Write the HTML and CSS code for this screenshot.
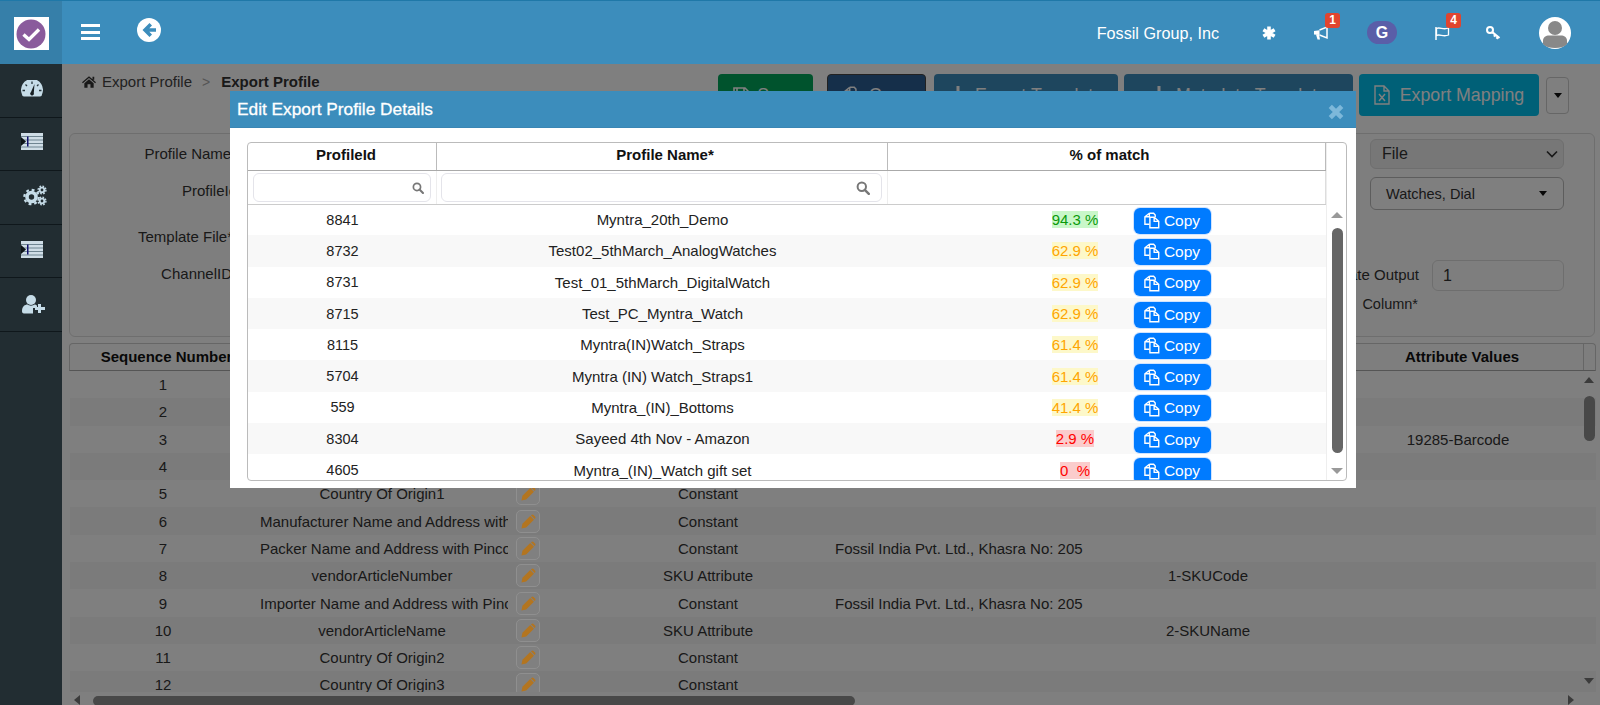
FILE: index.html
```html
<!DOCTYPE html>
<html lang="en">
<head>
<meta charset="utf-8">
<title>Export Profile</title>
<link rel="stylesheet" href="styles.css">
</head>
<body>
<svg class="defs" width="0" height="0" aria-hidden="true">
  <symbol id="i-copy" viewBox="0 0 16 16">
    <path d="M6 1.200H10L11.500 2.800V5M6 1.200L1.800 4.500V11.500H6M6 1.200V4.500H1.800" fill="none" stroke="currentColor" stroke-width="1.300"/>
    <path d="M10.500 5H6.500V14.800H14.800V8.800L10.500 5ZM10.500 5V8.800H14.800" fill="none" stroke="currentColor" stroke-width="1.300"/>
  </symbol>
  <symbol id="i-pencil" viewBox="0 0 16 16">
    <path d="M0.500 15.500L1.500 10.500L9.800 2.200L13.800 6.200L5.500 14.500Z" fill="currentColor"/>
    <path d="M11 1L12.800 0.500L15.500 3.200L15 5L14.600 5.400L10.600 1.400Z" fill="currentColor"/>
  </symbol>
  <symbol id="i-search" viewBox="0 0 14 14">
    <circle cx="5.800" cy="5.800" r="4.200" fill="none" stroke="currentColor" stroke-width="2"/>
    <path d="M8.800 8.800L12.800 12.800" stroke="currentColor" stroke-width="2.400" stroke-linecap="round"/>
  </symbol>
  <symbol id="i-indent" viewBox="0 0 22 17">
    <rect width="22" height="17" fill="#cfdde6"/>
    <path d="M0 3.500H22M0 7H22M0 10.500H22M0 14H22" stroke="#6f8591" stroke-width="1"/>
    <path d="M0 4L5 8.500L0 13Z" fill="#0d1316"/>
    <rect x="6" y="3.500" width="1.500" height="10" fill="#10106a"/>
  </symbol>
  <symbol id="i-down" viewBox="0 0 18 18">
    <path d="M7.500 0H10.500V9H14L9 14L4 9H7.500ZM1 14H5L9 16.500L13 14H17V18H1Z" fill="currentColor"/>
  </symbol>
</svg>

<div class="app">
  <header class="topbar">
    <div class="brand">
      <div class="logo">
        <svg viewBox="0 0 34 32" width="34" height="32"><circle cx="17" cy="16" r="14.500" fill="#8a5b9c"/><path d="M9.500 16.500L15 21.500L25 11.500" fill="none" stroke="#fff" stroke-width="3.400"/></svg>
      </div>
    </div>
    <button class="burger" type="button" aria-label="Menu"><span></span><span></span><span></span></button>
    <svg class="back" viewBox="0 0 24 24" width="24" height="24"><circle cx="12" cy="12" r="12" fill="#fff"/><path d="M12.500 5L5.500 12L12.500 19L15 16.500L12.300 13.800H19V10.200H12.300L15 7.500Z" fill="#3c8dbc"/></svg>
    <div class="topright">
      <span class="company">Fossil Group, Inc</span>
      <span class="ticon ml-asterisk">
        <svg viewBox="0 0 16 16" width="16" height="16"><path d="M8 1.500V14.500M2.400 4.750L13.600 11.250M13.600 4.750L2.400 11.250" stroke="#fff" stroke-width="3.600"/></svg>
      </span>
      <span class="ticon ml-mega">
        <svg viewBox="0 0 16 16" width="16" height="16"><path d="M1 6L6.500 5.200L6.500 10L1 9.500Z" fill="#fff"/><path d="M6.500 5L14 2V13L6.500 10" fill="none" stroke="#fff" stroke-width="1.500"/><path d="M3 9.500H6L7 14.500H4.500Z" fill="#fff"/></svg>
        <span class="badge">1</span>
      </span>
      <span class="gpill">G</span>
      <span class="ticon ml-flag">
        <svg viewBox="0 0 16 16" width="16" height="16"><path d="M2 2V15" stroke="#fff" stroke-width="1.500"/><path d="M2.500 3.500C6 1.500 9 5.500 14.500 3V10C9 12.500 6 8.500 2.500 10.500Z" fill="none" stroke="#fff" stroke-width="1.300"/></svg>
        <span class="badge">4</span>
      </span>
      <span class="ticon ml-key">
        <svg viewBox="0 0 16 16" width="16" height="16"><circle cx="5" cy="5" r="3" fill="none" stroke="#fff" stroke-width="2"/><path d="M7.200 7.200L14.500 13M10.500 9.800L9 11.600M13 12L11.500 13.800" stroke="#fff" stroke-width="2.200"/></svg>
      </span>
      <span class="avatar">
        <svg viewBox="0 0 32 32" width="32" height="32"><circle cx="16" cy="16" r="16" fill="#fff"/><circle cx="16" cy="11" r="7" fill="#888"/><path d="M4 24C4 20 7 18.500 10 18.500H22C25 18.500 28 20 28 24V27C25 30 21 31 16 31C11 31 7 30 4 27Z" fill="#888"/></svg>
      </span>
    </div>
  </header>

  <div class="shell">
    <nav class="sidebar">
      <a class="navitem">
        <svg viewBox="0 0 22 17" width="22" height="17"><path d="M1 14.500A11 11 0 1 1 21 14.500Q21 16.500 19 16.500H3Q1 16.500 1 14.500Z" fill="#c6dce8"/><path d="M11 1.500V4M4.500 4.500L6 6M17.500 4.500L16 6M1.500 10.500H4M18 10.500H20.500" stroke="#26343b" stroke-width="1.300"/><path d="M13.500 4L10 12A1.900 1.900 0 1 0 12.800 12.800Z" fill="#161e22"/></svg>
      </a>
      <a class="navitem">
        <svg width="22" height="17"><use href="#i-indent"/></svg>
      </a>
      <a class="navitem navitem-cog">
        <svg viewBox="0 0 24 21" width="24" height="21">
          <circle cx="8.500" cy="12" r="4.500" fill="none" stroke="#c6dce8" stroke-width="3.600"/>
          <circle cx="8.500" cy="12" r="7.200" fill="none" stroke="#c6dce8" stroke-width="2.200" stroke-dasharray="2.800 2.850"/>
          <circle cx="19" cy="5" r="2.300" fill="none" stroke="#c6dce8" stroke-width="1.800"/>
          <circle cx="19" cy="5" r="3.900" fill="none" stroke="#c6dce8" stroke-width="1.400" stroke-dasharray="1.700 1.360"/>
          <circle cx="19" cy="16" r="2.300" fill="none" stroke="#c6dce8" stroke-width="1.800"/>
          <circle cx="19" cy="16" r="3.900" fill="none" stroke="#c6dce8" stroke-width="1.400" stroke-dasharray="1.700 1.360"/>
        </svg>
      </a>
      <a class="navitem">
        <svg width="22" height="17"><use href="#i-indent"/></svg>
      </a>
      <a class="navitem navitem-user">
        <svg viewBox="0 0 24 19" width="24" height="19"><circle cx="9" cy="5" r="5" fill="#c6dce8"/><path d="M0 16C0 11.500 3 9.500 5.500 9.500C7 11 11 11 12.500 9.500C13.500 9.500 14 10 15 10.500V13H11V18.500H2C0.500 18.500 0 17.500 0 16Z" fill="#c6dce8"/><path d="M17.500 9V18M13 13.500H23" stroke="#c6dce8" stroke-width="3"/></svg>
      </a>
    </nav>

    <main class="main">
      <div class="toolbar">
        <div class="crumbs">
          <svg viewBox="0 0 24 20" width="14" height="12"><path d="M12 0L24 10.500L22.500 12L12 3.300L1.500 12L0 10.500ZM18 1H21V6H18ZM4 12L12 5.300L20 12V20H14.500V14H9.500V20H4Z" fill="#333"/></svg>
          <span class="crumb">Export Profile</span>
          <span class="crumb-sep">&gt;</span>
          <b class="crumb-now">Export Profile</b>
        </div>
        <div class="actions">
          <button class="btn btn-save" type="button"><svg viewBox="0 0 16 16" width="16" height="16"><path d="M1 1H12L15 4V15H1ZM4 1V6H11V1M4 15V9H12V15" fill="none" stroke="#fff" stroke-width="1.600"/></svg>Save</button>
          <button class="btn btn-copy" type="button"><svg width="18" height="18"><use href="#i-copy"/></svg>Copy</button>
          <button class="btn btn-tpl1" type="button"><svg width="18" height="18"><use href="#i-down"/></svg>Export Template</button>
          <button class="btn btn-tpl2" type="button"><svg width="18" height="18"><use href="#i-down"/></svg>Metadata Template</button>
          <button class="btn btn-map" type="button"><svg viewBox="0 0 16 20" width="16" height="20"><path d="M1 1H10L15 6V19H1ZM10 1V6H15" fill="none" stroke="#fff" stroke-width="1.400"/><path d="M5 9L11 16M11 9L5 16" stroke="#fff" stroke-width="1.500"/></svg>Export Mapping</button>
          <button class="btn-caret" type="button" aria-label="More"><span class="caret-black"></span></button>
        </div>
      </div>

      <section class="formpanel">
        <div class="labels">
          <label class="lbl lbl-a">Profile Name*</label>
          <label class="lbl lbl-b">ProfileId</label>
          <label class="lbl lbl-c">Template File*</label>
          <label class="lbl lbl-d">ChannelID</label>
        </div>
        <div class="fields">
          <div class="select-file">File
            <svg viewBox="0 0 12 8" width="12" height="8"><path d="M1 1.500L6 6.500L11 1.500" fill="none" stroke="#333" stroke-width="1.700"/></svg>
          </div>
          <div class="select-multi">Watches, Dial<span class="caret-black"></span></div>
          <div class="output-row">
            <span class="output-lbl">Duplicate Output</span>
            <span class="output-input">1</span>
          </div>
          <div class="column-lbl">Column*</div>
        </div>
      </section>

      <section class="grid">
        <div class="grid-head">
          <div class="gh-seq">Sequence Number</div><div></div><div></div><div></div><div></div><div></div><div class="gh-attr">Attribute Values</div><div class="grid-head-end"></div>
        </div>
        <div class="grid-body">
          <div class="row"><span>1</span><span></span><span></span><span></span><span></span><span></span><span></span></div>
          <div class="row row-alt"><span>2</span><span></span><span></span><span></span><span></span><span></span><span></span></div>
          <div class="row"><span>3</span><span></span><span></span><span></span><span></span><span></span><span>19285-Barcode</span></div>
          <div class="row row-alt"><span>4</span><span></span><span></span><span></span><span></span><span></span><span></span></div>
          <div class="row"><span>5</span><span class="name">Country Of Origin1</span><span class="edit"><svg width="15" height="15"><use href="#i-pencil"/></svg></span><span>Constant</span><span></span><span></span><span></span></div>
          <div class="row row-alt"><span>6</span><span class="name">Manufacturer Name and Address with Pincode</span><span class="edit"><svg width="15" height="15"><use href="#i-pencil"/></svg></span><span>Constant</span><span></span><span></span><span></span></div>
          <div class="row"><span>7</span><span class="name">Packer Name and Address with Pincode</span><span class="edit"><svg width="15" height="15"><use href="#i-pencil"/></svg></span><span>Constant</span><span class="val">Fossil India Pvt. Ltd., Khasra No: 205</span><span></span><span></span></div>
          <div class="row row-alt"><span>8</span><span class="name">vendorArticleNumber</span><span class="edit"><svg width="15" height="15"><use href="#i-pencil"/></svg></span><span>SKU Attribute</span><span></span><span>1-SKUCode</span><span></span></div>
          <div class="row"><span>9</span><span class="name">Importer Name and Address with Pincode</span><span class="edit"><svg width="15" height="15"><use href="#i-pencil"/></svg></span><span>Constant</span><span class="val">Fossil India Pvt. Ltd., Khasra No: 205</span><span></span><span></span></div>
          <div class="row row-alt"><span>10</span><span class="name">vendorArticleName</span><span class="edit"><svg width="15" height="15"><use href="#i-pencil"/></svg></span><span>SKU Attribute</span><span></span><span>2-SKUName</span><span></span></div>
          <div class="row"><span>11</span><span class="name">Country Of Origin2</span><span class="edit"><svg width="15" height="15"><use href="#i-pencil"/></svg></span><span>Constant</span><span></span><span></span><span></span></div>
          <div class="row row-alt"><span>12</span><span class="name">Country Of Origin3</span><span class="edit"><svg width="15" height="15"><use href="#i-pencil"/></svg></span><span>Constant</span><span></span><span></span><span></span></div>
        </div>
        <div class="vbar"><span class="arr-up"></span><span class="vthumb"></span><span class="arr-down"></span></div>
        <div class="hbar"><span class="arr-left"></span><span class="hthumb"></span><span class="arr-right"></span></div>
      </section>

      <div class="backdrop"></div>

      <div class="modal">
        <div class="modal-head">
          <span class="modal-title">Edit Export Profile Details</span>
          <svg class="modal-x" viewBox="0 0 14 14" width="16" height="16"><path d="M2 2L12 12M12 2L2 12" stroke="#7db8da" stroke-width="4"/></svg>
        </div>
        <div class="modal-body">
          <div class="ptable">
            <div class="ptable-main">
              <div class="phead">
                <div class="ph-id">ProfileId</div><div>Profile Name*</div><div>% of match</div>
              </div>
              <div class="pfilter">
                <div class="fcell"><span class="finput"><svg width="14" height="14"><use href="#i-search"/></svg></span></div>
                <div class="fcell"><span class="finput"><svg width="14" height="14"><use href="#i-search"/></svg></span></div>
                <div class="fcell"></div>
              </div>
              <div class="pbody">
                <div class="prow"><span class="pid">8841</span><span>Myntra_20th_Demo</span><span class="pmatch"><span class="pwrap"><span class="pct pct-hi">94.3 %</span></span><button class="copy" type="button"><svg width="17" height="17"><use href="#i-copy"/></svg>Copy</button></span></div>
                <div class="prow prow-alt"><span class="pid">8732</span><span>Test02_5thMarch_AnalogWatches</span><span class="pmatch"><span class="pwrap"><span class="pct pct-mid">62.9 %</span></span><button class="copy" type="button"><svg width="17" height="17"><use href="#i-copy"/></svg>Copy</button></span></div>
                <div class="prow"><span class="pid">8731</span><span>Test_01_5thMarch_DigitalWatch</span><span class="pmatch"><span class="pwrap"><span class="pct pct-mid">62.9 %</span></span><button class="copy" type="button"><svg width="17" height="17"><use href="#i-copy"/></svg>Copy</button></span></div>
                <div class="prow prow-alt"><span class="pid">8715</span><span>Test_PC_Myntra_Watch</span><span class="pmatch"><span class="pwrap"><span class="pct pct-mid">62.9 %</span></span><button class="copy" type="button"><svg width="17" height="17"><use href="#i-copy"/></svg>Copy</button></span></div>
                <div class="prow"><span class="pid">8115</span><span>Myntra(IN)Watch_Straps</span><span class="pmatch"><span class="pwrap"><span class="pct pct-mid">61.4 %</span></span><button class="copy" type="button"><svg width="17" height="17"><use href="#i-copy"/></svg>Copy</button></span></div>
                <div class="prow prow-alt"><span class="pid">5704</span><span>Myntra (IN) Watch_Straps1</span><span class="pmatch"><span class="pwrap"><span class="pct pct-mid">61.4 %</span></span><button class="copy" type="button"><svg width="17" height="17"><use href="#i-copy"/></svg>Copy</button></span></div>
                <div class="prow"><span class="pid">559</span><span>Myntra_(IN)_Bottoms</span><span class="pmatch"><span class="pwrap"><span class="pct pct-mid">41.4 %</span></span><button class="copy" type="button"><svg width="17" height="17"><use href="#i-copy"/></svg>Copy</button></span></div>
                <div class="prow prow-alt"><span class="pid">8304</span><span>Sayeed 4th Nov - Amazon</span><span class="pmatch"><span class="pwrap"><span class="pct pct-lo">2.9 %</span></span><button class="copy" type="button"><svg width="17" height="17"><use href="#i-copy"/></svg>Copy</button></span></div>
                <div class="prow"><span class="pid">4605</span><span>Myntra_(IN)_Watch gift set</span><span class="pmatch"><span class="pwrap"><span class="pct pct-lo">0 &nbsp;%</span></span><button class="copy" type="button"><svg width="17" height="17"><use href="#i-copy"/></svg>Copy</button></span></div>
              </div>
            </div>
            <div class="pscroll"><span class="parr-up"></span><span class="pthumb"></span><span class="parr-down"></span></div>
          </div>
        </div>
      </div>
    </main>
  </div>
</div>
</body>
</html>
```

FILE: styles.css
```css
* { box-sizing: border-box; }
html, body { margin: 0; height: 705px; overflow: hidden; }
body { font-family: "Liberation Sans", Arial, sans-serif; font-size: 15px; color: #333; background: #fff; }
.defs { position: absolute; }
button { font-family: inherit; }

.app { display: flex; flex-direction: column; height: 705px; }

/* top bar */
.topbar { height: 64px; flex: none; display: flex; align-items: stretch; background: #3c8dbc; border-top: 1px solid #1f78a8; color: #fff; }
.brand { width: 62px; background: #367fa9; display: flex; justify-content: center; padding-top: 16px; }
.logo { width: 35px; height: 33px; background: #fff; display: flex; align-items: center; justify-content: center; }
.burger { width: 19px; height: 16px; margin: 23px 0 0 19px; padding: 0; border: 0; background: none; display: flex; flex-direction: column; justify-content: space-between; }
.burger span { display: block; height: 3px; background: #fff; }
.back { margin: 17px 0 0 37px; }
.topright { margin-left: auto; display: flex; align-items: center; padding: 0 29px 0 0; }
.company { font-size: 16.200px; margin-top: 2px; }
.ticon { position: relative; width: 16px; height: 16px; display: block; }
.ticon svg { display: block; }
.ml-asterisk { margin-left: 42px; }
.ml-mega { margin-left: 36px; }
.ml-flag { margin-left: 37px; }
.ml-key { margin-left: 35px; }
.badge { position: absolute; top: -12px; left: 12px; width: 15px; height: 15px; border-radius: 3px; background: #e0452f; color: #fff; font-size: 12px; font-weight: 700; line-height: 15px; text-align: center; }
.gpill { margin-left: 38px; width: 30px; height: 23px; border-radius: 12px; background: #5a5ea8; color: #fff; font-weight: 700; font-size: 16px; line-height: 23px; text-align: center; }
.avatar { margin-left: 38px; width: 32px; height: 32px; display: block; }

/* shell */
.shell { flex: 1; display: flex; min-height: 0; }
.sidebar { width: 62px; flex: none; background: #222d32; }
.navitem { height: 53.600px; display: flex; align-items: center; justify-content: center; border-bottom: 1px solid #0f171b; padding: 0 0 4px 2px; }
.navitem-cog { padding-left: 8px; }
.navitem-user { padding: 0 0 0 5px; }

.main { flex: 1; min-width: 0; display: flex; flex-direction: column; background: #fff; }

/* toolbar */
.toolbar { height: 69px; flex: none; display: flex; align-items: flex-start; padding: 10px 31px 0 20px; }
.crumbs { display: flex; align-items: center; height: 15px; margin-top: 0; }
.crumb { margin-left: 6px; font-size: 15px; color: #444; }
.crumb-sep { margin-left: 10px; color: #aaa; font-size: 14px; }
.crumb-now { margin-left: 11px; font-size: 15px; color: #333; }
.actions { margin-left: auto; display: flex; align-items: center; }
.btn { height: 42px; border: 1px solid transparent; border-radius: 4px; color: #fff; font-size: 17.800px; padding: 0; display: flex; align-items: center; justify-content: center; gap: 8px; }
.btn-save { width: 95px; background: #00a65a; }
.btn-copy { width: 99px; margin-left: 14px; background: #2a5f95; border-color: #444; }
.btn-tpl1 { width: 184px; margin-left: 8px; background: #3c8dbc; }
.btn-tpl2 { width: 229px; margin-left: 6px; background: #3c8dbc; }
.btn-map { width: 180px; margin-left: 6px; background: #00c0ef; gap: 10px; }
.btn-caret { width: 23px; height: 37px; margin-left: 7px; border: 1px solid #ccc; border-radius: 4px; background: #fff; padding: 0; display: flex; align-items: center; justify-content: center; }
.caret-black { display: inline-block; width: 0; height: 0; border-left: 4.500px solid transparent; border-right: 4.500px solid transparent; border-top: 5px solid #111; }

/* form panel */
.formpanel { height: 204px; flex: none; margin: 0 5px 0 7px; border: 1px solid #ddd; border-radius: 6px; display: flex; justify-content: space-between; background: #fdfdfd; padding-right: 30px; }
.labels { width: 167px; display: flex; flex-direction: column; align-items: flex-end; padding-top: 11px; }
.lbl { display: block; height: 20px; white-space: nowrap; }
.lbl-b { margin-top: 17px; }
.lbl-c { margin-top: 26px; margin-right: 4px; }
.lbl-d { margin-top: 17px; margin-right: 5px; }
.fields { width: 240px; display: flex; flex-direction: column; align-items: flex-end; padding-top: 5px; }
.select-file { width: 194px; height: 30px; border-radius: 6px; border: 1px solid #ddd; background: #eee; font-size: 16px; display: flex; align-items: center; justify-content: space-between; padding: 0 5px 0 11px; }
.select-multi { width: 194px; height: 33px; margin-top: 8px; border-radius: 6px; border: 1px solid #bbb; background: #fff; font-size: 14.500px; display: flex; align-items: center; justify-content: space-between; padding: 0 16px 0 15px; }
.output-row { display: flex; align-items: center; gap: 13px; margin-top: 50px; }
.output-lbl { white-space: nowrap; font-size: 15px; margin-top: -2px; }
.output-input { width: 132px; height: 31px; border-radius: 6px; border: 1px solid #ddd; padding-left: 10px; font-size: 16px; line-height: 29px; }
.column-lbl { margin-top: 3px; width: 100%; padding-right: 146px; text-align: right; font-size: 14.500px; line-height: 20px; }

/* data grid */
.grid { flex: 1; min-height: 0; margin: 6px 4px 0 7px; position: relative; }
.grid-head { height: 28px; display: grid; grid-template-columns: 186px 256px 69px 254px 248px 250px 250px 13px; border: 1px solid #ccc; border-bottom-color: #aaa; border-radius: 4px 4px 0 0; font-weight: 700; color: #111; text-align: center; line-height: 26px; background: #fdfdfd; }
.grid-head > div { white-space: nowrap; }
.gh-seq { padding-left: 7px; }
.gh-attr { padding-left: 8px; }
.grid-head-end { border-left: 1px solid #ccc; }
.grid-body { height: 321px; overflow: hidden; padding-left: 1px; }
.row { height: 27.300px; display: grid; grid-template-columns: 186px 256px 69px 254px 248px 250px 250px; align-items: center; text-align: center; white-space: nowrap; color: #333; }
.row-alt { background: #f7f7f7; }
.name { overflow: hidden; margin: 0 4px; padding-right: 4px; }
.val { text-align: left; overflow: hidden; }
.edit { position: relative; z-index: 6; justify-self: start; margin-left: 4px; width: 24px; height: 23px; border: 1px solid #8f8f8f; border-radius: 5px; background: #808080; color: #b37520; display: flex; align-items: center; justify-content: center; }
.vbar { position: absolute; right: 0; top: 28px; width: 13px; height: 321px; }
.arr-up { position: absolute; top: 6px; left: 1px; border-left: 5.500px solid transparent; border-right: 5.500px solid transparent; border-bottom: 6px solid #777; }
.vthumb { position: absolute; top: 25px; left: 1px; width: 11px; height: 45px; border-radius: 6px; background: #909090; }
.arr-down { position: absolute; top: 307px; left: 1px; border-left: 5.500px solid transparent; border-right: 5.500px solid transparent; border-top: 6px solid #777; }
.hbar { position: absolute; left: 0; right: 0; bottom: 0; height: 13px; }
.arr-left { position: absolute; top: 3px; left: 5px; border-top: 5.500px solid transparent; border-bottom: 5.500px solid transparent; border-right: 6px solid #777; }
.hthumb { position: absolute; top: 4px; left: 24px; width: 762px; height: 10px; border-radius: 6px; background: #909090; }
.arr-right { position: absolute; top: 3px; right: 22px; border-top: 5.500px solid transparent; border-bottom: 5.500px solid transparent; border-left: 6px solid #777; }

/* modal */
.backdrop { position: absolute; left: 62px; top: 64px; right: 0; bottom: 0; background: rgba(0, 0, 0, .5); z-index: 5; }
.modal { position: absolute; left: 230px; top: 91px; width: 1126px; height: 397px; background: #fff; z-index: 10; display: flex; flex-direction: column; }
.modal-head { height: 37px; flex: none; background: #3c8dbc; border-bottom: 1px solid #3a86b4; display: flex; align-items: center; justify-content: space-between; padding: 0 12px 0 7px; color: #fff; }
.modal-title { font-size: 17.300px; -webkit-text-stroke: .3px #fff; }
.modal-x { margin-top: 6px; }
.modal-body { flex: 1; padding: 14px 9px 0 17px; }
.ptable { width: 1100px; height: 339px; border: 1px solid #bbb; border-radius: 4px; display: flex; overflow: hidden; }
.ptable-main { width: 1078px; flex: none; display: flex; flex-direction: column; }
.phead { height: 28px; flex: none; display: grid; grid-template-columns: 189px 451px 438px; border-bottom: 1px solid #aaa; font-weight: 700; color: #111; text-align: center; line-height: 24px; }
.phead > div { border-right: 1px solid #bbb; padding-left: 6px; }
.phead > .ph-id { padding-left: 8px; }
.pfilter { height: 34px; flex: none; display: grid; grid-template-columns: 189px 451px 438px; border-bottom: 1px solid #ccc; }
.fcell { padding: 2px 5px 0; border-right: 1px solid #eee; }
.fcell:nth-child(2) { padding-left: 4px; }
.fcell:nth-child(2) .finput { padding-right: 11px; }
.fcell:nth-child(3) { border-right: 1px solid #ddd; }
.finput { height: 29px; border: 1px solid #e4e4ea; border-radius: 6px; display: flex; align-items: center; justify-content: flex-end; padding-right: 6px; color: #777; }
.fcell:nth-child(1) .finput svg { width: 12px; height: 12px; }
.pbody { flex: 1; min-height: 0; overflow: hidden; margin-top: -1px; }
.prow { height: 31.300px; display: grid; grid-template-columns: 189px 451px 438px; align-items: center; text-align: center; color: #222; white-space: nowrap; }
.prow-alt { background: #f8f8f8; }
.pid { font-size: 14.500px; }
.pmatch { display: flex; align-items: center; padding-left: 128px; }
.pwrap { width: 118px; text-align: center; }
.pct { font-size: 15px; line-height: 17px; display: inline-block; }
.pct-hi { color: #0b9a0b; background: #c9f7c9; }
.pct-mid { color: #ffa500; background: #fdf8c9; }
.pct-lo { color: #f00; background: #fbcccc; }
.copy { width: 77px; height: 26px; margin-top: 2px; border: 0; border-radius: 6px; background: #007bff; color: #fff; font-size: 15.500px; padding: 0; display: flex; align-items: center; justify-content: center; gap: 4px; box-shadow: 0 0 0 1px #cfe3ff; }
.copy svg { margin-left: -2px; }
.pscroll { flex: 1; position: relative; border-left: 1px solid #eee; }
.parr-up { position: absolute; top: 69px; left: 4px; border-left: 6px solid transparent; border-right: 6px solid transparent; border-bottom: 6px solid #999; }
.pthumb { position: absolute; top: 85px; left: 5px; width: 11px; height: 225px; border-radius: 6px; background: #666; }
.parr-down { position: absolute; top: 325px; left: 4px; border-left: 6px solid transparent; border-right: 6px solid transparent; border-top: 6px solid #999; }
```
